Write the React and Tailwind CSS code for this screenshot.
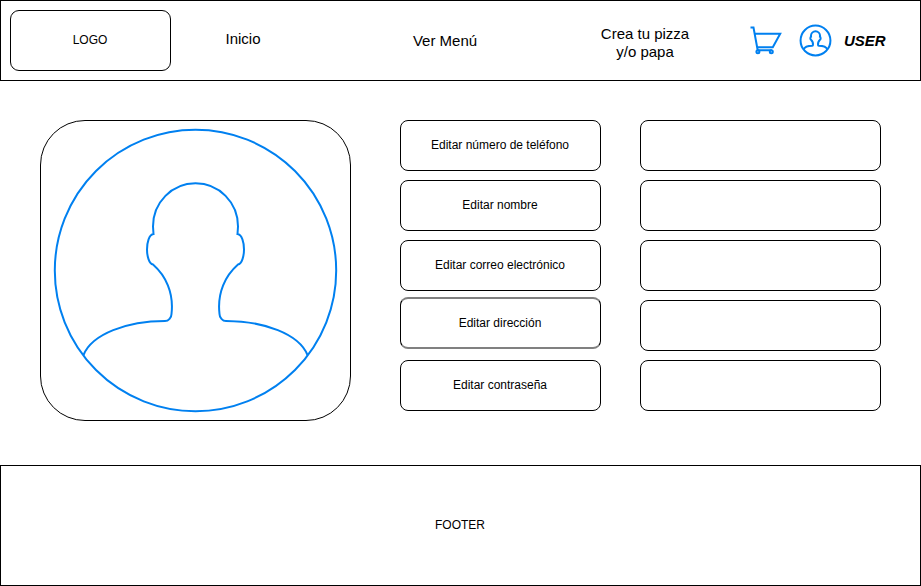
const editLabels = [
  { text: 'Editar número de teléfono', box: 'mb-[9px] h-[51px] border pb-[2px]' },
  { text: 'Editar nombre', box: 'mb-[9px] h-[51px] border pb-[2px]' },
  { text: 'Editar correo electrónico', box: 'mb-[6px] h-[51px] border pb-[2px]' },
  { text: 'Editar dirección', box: 'mb-[11px] h-[52px] border-x border-y-2 border-y-[#808080] pb-px' },
  { text: 'Editar contraseña', box: 'h-[51px] border pb-[2px]' },
];

function UserIcon({ className, viewBox }) {
  return (
    <svg className={className} viewBox={viewBox} fill="none" stroke="#0080f0" strokeWidth="2" overflow="visible">
      <circle cx="141" cy="141" r="140.7" vectorEffect="non-scaling-stroke" />
      <path
        vectorEffect="non-scaling-stroke"
        strokeMiterlimit="10"
        d="M29 225.5C37.500 204.500 72.500 191.500 110.500 191.500C114 191.500 117 188 117 184.500C119.500 163 111 146 98.500 135C94.500 134.500 92.500 126 92.500 120C92.500 113 94.500 105 99 104.500L98.500 97C98.500 73 117.500 53.800 141 53.800C164.500 53.800 183.500 73 183.500 97L183 104.500C187.500 105 189.500 113 189.500 120C189.500 126 187.500 134.500 183.500 135C171 146 162.500 163 165 184.500C165 188 168 191.500 171.500 191.500C209.500 191.500 244.500 204.500 253 225.500"
      />
    </svg>
  );
}

function CartIcon() {
  return (
    <svg className="h-[31px] w-[33px]" viewBox="0 0 33 31" fill="none" stroke="#0080f0" strokeWidth="2">
      <path d="M.5 2.500H3.500L7.700 25.200M4.800 8.700H30.200L22.800 22.300H7.300M7.200 25.200H21.800" />
      <circle cx="7.900" cy="26.700" r="1.500" />
      <circle cx="21.300" cy="26.700" r="1.500" />
    </svg>
  );
}

export default function App() {
  return (
    <div className="flex h-[586px] w-[921px] flex-col overflow-hidden bg-white font-['Liberation_Sans',Arial,sans-serif] text-xs text-black">
      <header className="flex h-[81px] shrink-0 border border-black text-[15px] leading-[18px]">
        <div className="mt-[9px] ml-[9px] flex h-[61px] w-[161px] items-center justify-center rounded-[9px] border border-black pr-px pb-[2px] text-xs">
          LOGO
        </div>
        <nav className="flex">
          <a className="mt-[29px] ml-[32px] w-20 text-center">Inicio</a>
          <a className="mt-[31px] ml-[112px] w-[100px] text-center">Ver Menú</a>
          <a className="mt-6 ml-[100px] w-[100px] text-center">
            Crea tu pizza
            <br />
            y/o papa
          </a>
        </nav>
        <div className="mt-6 ml-[55px] flex">
          <CartIcon />
          <UserIcon className="ml-[17px] h-[31px] w-[31px]" viewBox="-5 -5 292 292" />
          <span className="mt-[7px] ml-[13px] font-bold italic">USER</span>
        </div>
      </header>

      <main className="flex h-[384px] shrink-0 items-start pt-[39px] pl-10">
        <div className="flex h-[301px] w-[311px] items-center justify-center rounded-[45px] border border-black">
          <UserIcon className="h-[283px] w-[283px]" viewBox="-0.5 -0.5 283 283" />
        </div>
        <div className="ml-[49px] w-[201px]">
          {editLabels.map(({ text, box }) => (
            <button
              key={text}
              className={`flex w-full items-center justify-center rounded-[8px] border-black pr-px ${box}`}
            >
              {text}
            </button>
          ))}
        </div>
        <div className="ml-[39px] flex w-[241px] flex-col gap-[9px]">
          {editLabels.map(({ text }) => (
            <input key={text} aria-label={text} className="h-[51px] w-full rounded-[8px] border border-black" />
          ))}
        </div>
      </main>

      <footer className="flex h-[121px] shrink-0 items-center justify-center border border-black pr-px pb-[2px]">FOOTER</footer>
    </div>
  );
}
